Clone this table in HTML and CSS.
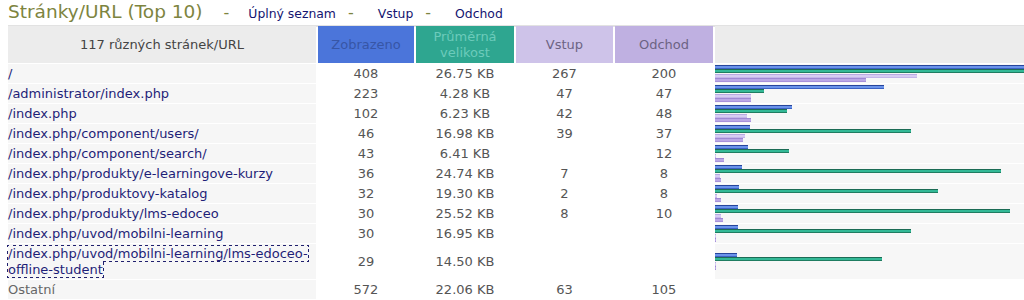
FILE: index.html
```html
<!DOCTYPE html>
<html lang="cs">
<head>
<meta charset="utf-8">
<title>Stránky/URL</title>
<link rel="stylesheet" href="styles.css">
</head>
<body>
<div class="titlebar">
  <span class="title">Stránky/URL (Top 10)</span>
  <span class="dash d1">-</span>
  <a class="tlink" href="#">Úplný seznam</a>
  <span class="dash d2">-</span>
  <a class="tlink" href="#">Vstup</a>
  <span class="dash d2">-</span>
  <a class="tlink" href="#">Odchod</a>
</div>
<div class="topline"></div>
<table class="data">
  <colgroup>
    <col class="c-url"><col class="c-num"><col class="c-size"><col class="c-in"><col class="c-out"><col class="c-bar">
  </colgroup>
  <thead>
    <tr>
      <th class="h-url">117 různých stránek/URL</th>
      <th class="h-pages">Zobrazeno</th>
      <th class="h-size">Průměrná velikost</th>
      <th class="h-in">Vstup</th>
      <th class="h-out">Odchod</th>
      <th class="h-bar"></th>
    </tr>
  </thead>
  <tbody>
    <tr><td class="url"><a href="#">/</a></td><td>408</td><td>26.75 KB</td><td>267</td><td>200</td>
      <td class="bars"><i class="b bp" style="width:309px"></i><i class="b bs" style="width:309px"></i><i class="b bi" style="width:202px"></i><i class="b bo" style="width:151px"></i></td></tr>
    <tr><td class="url"><a href="#">/administrator/index.php</a></td><td>223</td><td>4.28 KB</td><td>47</td><td>47</td>
      <td class="bars"><i class="b bp" style="width:169px"></i><i class="b bs" style="width:49px"></i><i class="b bi" style="width:36px"></i><i class="b bo" style="width:36px"></i></td></tr>
    <tr><td class="url"><a href="#">/index.php</a></td><td>102</td><td>6.23 KB</td><td>42</td><td>48</td>
      <td class="bars"><i class="b bp" style="width:77px"></i><i class="b bs" style="width:72px"></i><i class="b bi" style="width:32px"></i><i class="b bo" style="width:36px"></i></td></tr>
    <tr><td class="url"><a href="#">/index.php/component/users/</a></td><td>46</td><td>16.98 KB</td><td>39</td><td>37</td>
      <td class="bars"><i class="b bp" style="width:35px"></i><i class="b bs" style="width:196px"></i><i class="b bi" style="width:30px"></i><i class="b bo" style="width:28px"></i></td></tr>
    <tr><td class="url"><a href="#">/index.php/component/search/</a></td><td>43</td><td>6.41 KB</td><td></td><td>12</td>
      <td class="bars"><i class="b bp" style="width:33px"></i><i class="b bs" style="width:74px"></i><i class="b bi" style="width:1px"></i><i class="b bo" style="width:9px"></i></td></tr>
    <tr><td class="url"><a href="#">/index.php/produkty/e-learningove-kurzy</a></td><td>36</td><td>24.74 KB</td><td>7</td><td>8</td>
      <td class="bars"><i class="b bp" style="width:27px"></i><i class="b bs" style="width:286px"></i><i class="b bi" style="width:5px"></i><i class="b bo" style="width:6px"></i></td></tr>
    <tr><td class="url"><a href="#">/index.php/produktovy-katalog</a></td><td>32</td><td>19.30 KB</td><td>2</td><td>8</td>
      <td class="bars"><i class="b bp" style="width:24px"></i><i class="b bs" style="width:223px"></i><i class="b bi" style="width:2px"></i><i class="b bo" style="width:6px"></i></td></tr>
    <tr><td class="url"><a href="#">/index.php/produkty/lms-edoceo</a></td><td>30</td><td>25.52 KB</td><td>8</td><td>10</td>
      <td class="bars"><i class="b bp" style="width:23px"></i><i class="b bs" style="width:295px"></i><i class="b bi" style="width:6px"></i><i class="b bo" style="width:8px"></i></td></tr>
    <tr><td class="url"><a href="#">/index.php/uvod/mobilni-learning</a></td><td>30</td><td>16.95 KB</td><td></td><td></td>
      <td class="bars"><i class="b bp" style="width:23px"></i><i class="b bs" style="width:196px"></i><i class="b bi" style="width:1px"></i><i class="b bo" style="width:1px"></i></td></tr>
    <tr><td class="url"><a class="focused" href="#">/index.php/uvod/mobilni-learning/lms-edoceo-offline-student</a></td><td>29</td><td>14.50 KB</td><td></td><td></td>
      <td class="bars"><i class="b bp" style="width:22px"></i><i class="b bs" style="width:167px"></i><i class="b bi" style="width:1px"></i><i class="b bo" style="width:1px"></i></td></tr>
    <tr><td class="url other">Ostatní</td><td>572</td><td>22.06 KB</td><td>63</td><td>105</td><td class="empty"></td></tr>
  </tbody>
</table>
</body>
</html>
```
FILE: styles.css
```css
html, body {
  margin: 0;
  padding: 0;
  background: #ffffff;
  overflow: hidden;
}
body {
  padding: 0 0 0 8px;
  font-family: "DejaVu Sans", Verdana, sans-serif;
}
.titlebar {
  display: flex;
  align-items: baseline;
  height: 24px;
  white-space: nowrap;
}
.title {
  font-size: 18.5px;
  line-height: 23px;
  color: #7d8440;
}
.dash {
  font-size: 16px;
  color: #7d8440;
}
.d1 { margin: 0 19px 0 21px; }
.d2 { margin: 0 24px 0 12px; }
.tlink {
  font-size: 12.4px;
  color: #141470;
  text-decoration: none;
}
.topline {
  height: 2px;
  margin-top: 1px;
  background: #e2e2e2;
}
.data {
  border-collapse: separate;
  border-spacing: 2px 1px;
  margin: -2px 0 0 -2px;
  table-layout: fixed;
  width: 1020px;
  font-size: 13px;
  line-height: 16px;
}
.c-url { width: 308px; }
.c-num { width: 96px; }
.c-size { width: 98px; }
.c-in { width: 97px; }
.c-out { width: 98px; }
.c-bar { width: 309px; }
th {
  font-weight: normal;
  padding: 3px 1px 2px;
  text-align: center;
  vertical-align: middle;
  line-height: 16px;
  font-size: 13px;
}
.h-url { background: #ececec; color: #444444; }
.h-pages { background: #4b75da; color: #3756a6; }
.h-size { background: #2ea690; color: #6ccbbb; }
.h-in { background: #cec3e9; color: #6c6383; }
.h-out { background: #bfb0e1; color: #6c6383; }
.h-bar { background: #ececec; }
td {
  padding: 2px 1px 1px;
  text-align: center;
  vertical-align: middle;
  color: #555555;
}
td.url {
  text-align: left;
  background: #f6f6f6;
  padding-left: 0;
}
td.url a {
  color: #1e1e78;
  text-decoration: none;
}
td.url a.focused {
  outline: 1px dotted #20206e;
}
td.other { color: #666666; }
td.bars {
  background: #f7f7f7;
  text-align: left;
  padding: 0;
  font-size: 0;
  line-height: 0;
}
td.empty { background: #ffffff; }
.b {
  display: block;
  height: 4px;
}
.bp { background: linear-gradient(#27459c 0 1px, #6a93ea 1px 3px, #3c62c4 3px); }
.bs { background: linear-gradient(#1c6c55 0 1px, #33b896 1px 3px, #1f7d61 3px); }
.bi { background: linear-gradient(#b9a9e2 0 1px, #d7ccf2 1px 3px, #c4b6ea 3px); margin-top: 1px; }
.bo { background: linear-gradient(#9f89d4 0 1px, #bba8e6 1px 3px, #a892da 3px); }
```
